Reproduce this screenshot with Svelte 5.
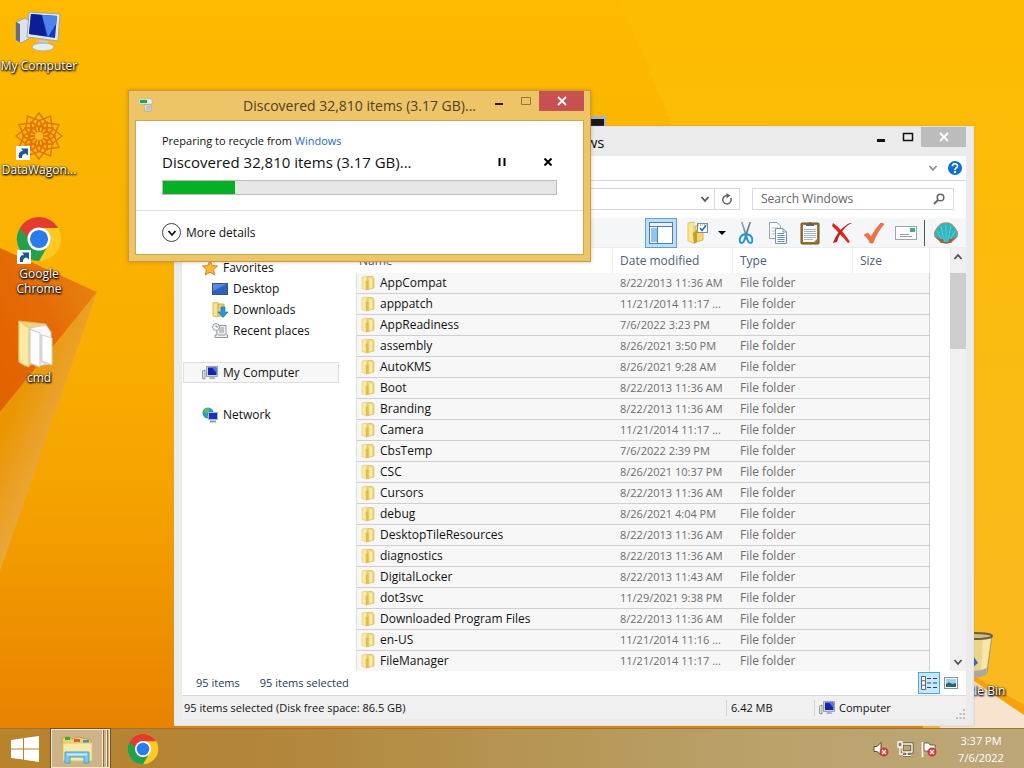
<script>
  const folders = [
    ['AppCompat', '8/22/2013 11:36 AM'],
    ['apppatch', '11/21/2014 11:17 ...'],
    ['AppReadiness', '7/6/2022 3:23 PM'],
    ['assembly', '8/26/2021 3:50 PM'],
    ['AutoKMS', '8/26/2021 9:28 AM'],
    ['Boot', '8/22/2013 11:36 AM'],
    ['Branding', '8/22/2013 11:36 AM'],
    ['Camera', '11/21/2014 11:17 ...'],
    ['CbsTemp', '7/6/2022 2:39 PM'],
    ['CSC', '8/26/2021 10:37 PM'],
    ['Cursors', '8/22/2013 11:36 AM'],
    ['debug', '8/26/2021 4:04 PM'],
    ['DesktopTileResources', '8/22/2013 11:36 AM'],
    ['diagnostics', '8/22/2013 11:36 AM'],
    ['DigitalLocker', '8/22/2013 11:43 AM'],
    ['dot3svc', '11/29/2021 9:38 PM'],
    ['Downloaded Program Files', '8/22/2013 11:36 AM'],
    ['en-US', '11/21/2014 11:16 ...'],
    ['FileManager', '11/21/2014 11:17 ...']
  ];
  const petals = Array.from({ length: 12 }, (_, i) => i * 30);
</script>

{#snippet shortcut()}
  <rect x="1" y="34" width="14" height="14" fill="#fff" />
  <path d="M4 46 C3 41 5 39 8 39 L6 36.500 H13 V43.500 L10.500 41.500 C8 42 7 43 7 46 Z" fill="#1b5796" />
{/snippet}

{#snippet chrome(size)}
  <svg width={size} height={size} viewBox="0 0 48 48" aria-hidden="true">
    <circle cx="24" cy="24" r="23" fill="#fdc922" />
    <path d="M24 24 L4.080 12.500 A23 23 0 0 0 24 47 L34 29.800 Z" fill="#259f4b" />
    <path d="M24 24 H13.500 L4.080 12.500 A23 23 0 0 1 43.900 12.500 H24 Z" fill="#e33b2e" />
    <circle cx="24" cy="24" r="12" fill="#fff" />
    <circle cx="24" cy="24" r="9.500" fill="#2a7cec" />
  </svg>
{/snippet}

{#snippet pc()}
  <svg width="16" height="16" viewBox="0 0 16 16" aria-hidden="true">
    <path d="M0.500 6 L3 5 V14 L0.500 13.500 Z" fill="#dde3dd" stroke="#7c8880" stroke-width=".8" />
    <path d="M4.500 1.500 H15.500 V11.500 H4.500 Z" fill="#c7d2e3" stroke="#8391a8" stroke-width=".8" />
    <path d="M6 2.500 H14.500 V10 H6 Z" fill="#1525a8" />
    <path d="M10 2.500 H14.500 V8 Z" fill="#5578e0" />
    <path d="M8.500 11.500 H12 L13.500 14 H7 Z" fill="#aab4c4" />
  </svg>
{/snippet}

{#snippet folder()}
  <svg width="16" height="16" viewBox="0 0 16 16" aria-hidden="true">
    <path d="M2 2 L6.500 1 V14.500 L2 13.500 Z" fill="#f9eaa4" stroke="#e6cd74" stroke-width=".7" />
    <path d="M7.500 1.500 H12 L14 3 V13 L8 14.500 Z" fill="#efd77c" stroke="#d9bb55" stroke-width=".7" />
    <path d="M5.500 6 L8.500 5 V14.500 L6 15.500 Z" fill="#e0bd52" />
    <path d="M9.500 3 L12 3.500 V13 L9.500 13.500 Z" fill="#f9ecab" />
  </svg>
{/snippet}

{#snippet chevron(up = false)}
  <svg width="10" height="10" viewBox="0 0 10 10" aria-hidden="true">
    <path d={up ? 'M1.500 7 L5 3 L8.500 7' : 'M1.500 3 L5 7 L8.500 3'} fill="none" stroke="currentColor" stroke-width="1.800" />
  </svg>
{/snippet}

<div class="screen">
  <svg class="wallpaper" viewBox="0 0 1024 768" preserveAspectRatio="none" aria-hidden="true">
    <defs>
      <linearGradient id="sky" x1="0" y1="0" x2="0" y2="1">
        <stop offset="0" stop-color="#fdba00" />
        <stop offset=".45" stop-color="#f9ae00" />
        <stop offset=".65" stop-color="#f5a200" />
        <stop offset=".95" stop-color="#e88200" />
      </linearGradient>
      <linearGradient id="fold" x1="1" y1="0" x2="0" y2=".8">
        <stop offset="0" stop-color="#e98a14" />
        <stop offset=".5" stop-color="#e46c06" />
        <stop offset="1" stop-color="#e36200" />
      </linearGradient>
      <linearGradient id="edge" gradientUnits="userSpaceOnUse" x1="10" y1="410" x2="58" y2="430">
        <stop offset="0" stop-color="#ea9600" />
        <stop offset="1" stop-color="#eba63a" />
      </linearGradient>
      <linearGradient id="right" x1="0" y1="0" x2="0" y2="1">
        <stop offset="0" stop-color="#fdbc00" />
        <stop offset="1" stop-color="#fab824" />
      </linearGradient>
    </defs>
    <rect width="1024" height="768" fill="url(#sky)" />
    <path d="M0 412 L97 292 L0 571 Z" fill="url(#edge)" />
    <path d="M0 248 L97 292 L0 412 Z" fill="url(#fold)" />
    <path d="M620 0 H1024 V768 H940 Z" fill="url(#right)" />
    <path d="M940 656 L1024 705 V718 L940 672 Z" fill="#f5a30c" />
    <path d="M940 658 L1024 715 V768 H940 Z" fill="#f8e3cf" />
  </svg>

  <main class="desktop">
    <ul class="shortcuts">
      <li>
        <svg width="48" height="48" viewBox="0 0 48 48" aria-hidden="true">
          <path d="M1 14 L10 10 L15 13 V30 L6 35 L1 32 Z" fill="#dfe2e6" stroke="#98a0aa" />
          <path d="M1 14 L5 16 V34 L1 32 Z" fill="#636c78" />
          <path d="M14 4 L45 6 L43 33 L12 29 Z" fill="#e3e7ec" stroke="#9ca5b3" />
          <path d="M16 6 L42 8 L40 30 L14 26 Z" fill="#153bbb" />
          <path d="M16 6 L27 7 L31 28 L14 26 Z" fill="#0a1e96" />
          <path d="M27 7 L42 8 L41 16 L33 29 Z" fill="#4c84ec" />
          <path d="M24 32 L33 33 L34 38 H23 Z" fill="#c5cbd3" />
          <ellipse cx="28" cy="39" rx="11" ry="4" fill="#e9ecef" stroke="#a8adb4" />
        </svg>
        <span>My Computer</span>
      </li>
      <li>
        <svg width="48" height="48" viewBox="0 0 48 48" aria-hidden="true">
          <g fill="none" stroke="#de7510" stroke-width="1.400">
            {#each petals as a}
              <path d="M24 16 L17 10 L24 1 L31 10 Z M24 24 L19 16 L24 8 L29 16 Z" transform="rotate({a} 24 24)" />
            {/each}
          </g>
          <circle cx="24" cy="24" r="4" fill="#fdbb1c" />
          {@render shortcut()}
        </svg>
        <span>DataWagon...</span>
      </li>
      <li>
        <div class="stack">
          {@render chrome(46)}
          <svg class="arrow" width="48" height="48" viewBox="0 0 48 48" aria-hidden="true">{@render shortcut()}</svg>
        </div>
        <span>Google Chrome</span>
      </li>
      <li>
        <svg width="48" height="48" viewBox="0 0 48 48" aria-hidden="true">
          <path d="M4 1 L31 4 V42 L10 46 L4 42 Z" fill="#f1d37c" stroke="#e0bb5c" />
          <path d="M15 8 L31 5 L36 12 V44 L20 46 Z" fill="#f8f8f8" stroke="#ccc" />
          <path d="M4 1 L14 8 V47 L4 42 Z" fill="#fbe9a8" stroke="#e5c56c" />
          <path d="M15 9 L25 13 V47 L15 43 Z" fill="#fcfcfc" stroke="#c8c8c8" />
          <path d="M25 14 L33 17 V45 L25 42 Z" fill="#d5d7d9" />
          <path d="M27 15 L37 18 V45 L27 41 Z" fill="#fff" stroke="#d2d2d2" />
        </svg>
        <span>cmd</span>
      </li>
    </ul>

    <div class="bin">
      <svg width="48" height="48" viewBox="0 0 48 48" aria-hidden="true">
        <path d="M6 4 H42 L37 42 Q24 48 11 42 Z" fill="#ecd489" stroke="#a59a78" />
        <path d="M33 6 H41 L36 40 L31 43 Z" fill="#f7e7ac" />
        <path d="M11 37 Q24 43 37 37 L36 44 Q24 49 12 44 Z" fill="#aaa89f" />
        <ellipse cx="24" cy="5" rx="18" ry="3" fill="#d5bd70" stroke="#625d50" stroke-width="2" />
        <path d="M18 30 L22 23 L28 32 L22 37 Z" fill="#2d67bd" />
      </svg>
      <span>Recycle Bin</span>
    </div>

    <div class="console"></div>

    <section class="window explorer" aria-label="Windows">
      <header class="titlebar">
        <h1>Windows</h1>
        <div class="controls">
          <button aria-label="Minimize"><svg width="10" height="12"><path d="M1 9.500 H9" stroke="#111" stroke-width="3" /></svg></button>
          <button aria-label="Maximize"><svg width="12" height="12"><path d="M1 2.500 H11 M1.500 2 V9.500 H10.500 V2" fill="none" stroke="#111" stroke-width="1.500" /></svg></button>
          <button class="close" aria-label="Close"><svg width="10" height="10"><path d="M1 1 L9 9 M9 1 L1 9" stroke="#fff" stroke-width="1.800" /></svg></button>
        </div>
      </header>
      <div class="client">
        <div class="ribbon">
          <button class="plain faint" aria-label="Expand the ribbon">{@render chevron()}</button>
          <button class="plain" aria-label="Help">
            <svg width="14" height="14" viewBox="0 0 14 14"><circle cx="7" cy="7" r="7" fill="#0d6fce" /><path d="M4.500 5.200 C4.500 2 9.500 2 9.500 5 C9.500 7 7 6.800 7 9" fill="none" stroke="#fff" stroke-width="1.700" /><rect x="6" y="10" width="2" height="2" fill="#fff" /></svg>
          </button>
        </div>
        <div class="address">
          <div class="path">
            <input aria-label="Address" />
            <button class="plain" aria-label="Previous locations">{@render chevron()}</button>
            <button class="plain refresh" aria-label="Refresh">
              <svg width="12" height="12" viewBox="0 0 12 12"><path d="M9.800 5 A4.200 4.200 0 1 1 6 2.500" fill="none" stroke="#666" stroke-width="1.500" /><path d="M5.500 0 L9.500 2.500 L5.500 5.500 Z" fill="#666" /></svg>
            </button>
          </div>
          <label class="search">
            <input type="text" placeholder="Search Windows" aria-label="Search Windows" />
            <svg width="12" height="12" viewBox="0 0 12 12" aria-hidden="true"><circle cx="7.500" cy="4.500" r="3.300" fill="none" stroke="#666" stroke-width="1.500" /><path d="M5 7 L1 11" stroke="#666" stroke-width="2" /></svg>
          </label>
        </div>
        <div class="toolbar">
          <button class="on" aria-label="Navigation pane">
            <svg width="24" height="22" viewBox="0 0 24 22"><rect x=".5" y=".5" width="23" height="21" fill="#fff" stroke="#4b7fae" /><rect x="1" y="1" width="22" height="3" fill="#e8f3fc" /><path d="M1 4.500 H23" stroke="#4b7fae" /><rect x="2" y="6" width="6" height="14" fill="#8fc5ef" /><path d="M8.500 5 V21" stroke="#4b7fae" /></svg>
          </button>
          <button aria-label="Folder options">
            <svg width="22" height="24" viewBox="0 0 22 24"><path d="M1 2 L7 1 V22 L1 20 Z" fill="#f8e795" stroke="#e2c764" /><path d="M8 5 L16 4 V19 L9 21 Z" fill="#f0d970" stroke="#d8bb4c" /><path d="M6 12 L10 9 V21 L7 23 Z" fill="#c79b2b" /><rect x="10.500" y="2.500" width="10" height="9" fill="#fff" stroke="#7d8ea8" /><path d="M11 4 H21" stroke="#7d8ea8" stroke-dasharray="1 1" /><path d="M13 7 L15 9.500 L19 4.500" fill="none" stroke="#2166c7" stroke-width="1.500" /></svg>
          </button>
          <button class="narrow" aria-label="More options"><svg width="8" height="4"><path d="M0 0 H8 L4 4 Z" /></svg></button>
          <button aria-label="Cut">
            <svg width="16" height="24" viewBox="0 0 16 24"><path d="M3 1 L4.500 1 L9.500 15 L7 14 Z" fill="#8b98a6" /><path d="M13 1 L11.500 1 L6.500 15 L9 14 Z" fill="#6f7d8d" /><path d="M7.500 13 C2 14 1 18 2 21 C5 24 7 19 8 14 C9 19 11 24 14 21 C15 18 14 14 8.500 13" fill="none" stroke="#2497d3" stroke-width="2" /></svg>
          </button>
          <button aria-label="Copy">
            <svg width="20" height="24" viewBox="0 0 20 24"><path d="M1.500 1.500 H9 L12.500 5 V17.500 H1.500 Z" fill="#fff" stroke="#8ea0b2" /><path d="M3.500 7 H10 M3.500 10 H10 M3.500 13 H10" stroke="#a4bbcf" /><path d="M7.500 7.500 H15 L18.500 11 V22.500 H7.500 Z" fill="#fff" stroke="#7f93a8" /><path d="M15 7.500 V11 H18.500" fill="none" stroke="#7f93a8" /><path d="M9.500 12.500 H16 M9.500 14.500 H16.500 M9.500 16.500 H16.500 M9.500 18.500 H16.500 M9.500 20.500 H16.500" stroke="#5b8fc0" /></svg>
          </button>
          <button aria-label="Paste">
            <svg width="20" height="24" viewBox="0 0 20 24"><rect x="1" y="2" width="18" height="21" rx="1" fill="#a2712d" stroke="#77501a" /><path d="M3 4 H17 V18 L14 21 H3 Z" fill="#fff" /><path d="M4 8.500 H16 M4 10.500 H16 M4 12.500 H16 M4 14.500 H16 M4 16.500 H16 M4 18.500 H13" stroke="#9fb4c6" /><path d="M6 5 V3 H8 Q10 -1 12 3 H14 V5 Z" fill="#59646b" /></svg>
          </button>
          <button aria-label="Delete">
            <svg width="22" height="22" viewBox="0 0 22 22"><path d="M2 1 C8 5 14 12 19 20 L17 21 C11 14 5 8 1 4 Z" fill="#d92918" /><path d="M21 1 C14 4 8 12 6 20 L2 21 C5 12 12 4 19 1 Z" fill="#c51f16" /></svg>
          </button>
          <button aria-label="Apply">
            <svg width="22" height="22" viewBox="0 0 22 22"><path d="M1 13 L5 11 L8 15 C11 9 15 4 18 1 L21 2 C16 8 12 15 10 21 H7 C6 18 4 15 1 13 Z" fill="#ee7248" stroke="#dd6238" stroke-width=".6" /></svg>
          </button>
          <button aria-label="Mail">
            <svg width="22" height="16" viewBox="0 0 22 16"><rect x=".5" y="1.500" width="21" height="13" fill="#fdfdfd" stroke="#9aa5ae" /><rect x="15" y="3" width="5" height="4" fill="#3eaa94" /><path d="M5 9.500 H14 M5 11.500 H17" stroke="#9a9fa8" /></svg>
          </button>
          <i class="rule"></i>
          <button aria-label="Shell">
            <svg width="24" height="22" viewBox="0 0 24 22"><path d="M7 20 L1 15 Q-1 10 3 6 Q7 0 12 1 Q17 0 21 6 Q25 10 23 15 L17 20 Q12 23 7 20 Z" fill="#2db5bd" stroke="#b98a5c" /><path d="M12 20 V3 M10 19 L7 4 M8 18 L3 9 M14 19 L17 4 M16 18 L21 9" stroke="#5fd0d6" /><path d="M2 15 L7 17 H17 L22 15 L17 21 H7 Z" fill="#a55f42" /><path d="M8 15 H16 L14 20 H10 Z" fill="#35c4cc" /></svg>
          </button>
        </div>

        <div class="panes">
          <nav>
            <ul>
              <li><svg width="16" height="16" viewBox="0 0 16 16" aria-hidden="true"><path d="M8 .5 L10.200 5.500 L15.500 6 L11.500 9.700 L12.700 15 L8 12.200 L3.300 15 L4.500 9.700 L.5 6 L5.800 5.500 Z" fill="#fcb930" stroke="#df7f22" /></svg>Favorites</li>
              <li class="sub"><svg width="16" height="16" viewBox="0 0 16 16" aria-hidden="true"><rect x=".5" y="2.500" width="15" height="11" fill="#2c62bd" stroke="#3c5377" /><path d="M1 3 H15 L1 10 Z" fill="#538ae0" /></svg>Desktop</li>
              <li class="sub"><svg width="16" height="16" viewBox="0 0 16 16" aria-hidden="true"><path d="M1 1 L6 .5 V15 L1 14 Z" fill="#f7e492" stroke="#d9b952" /><path d="M6 2 H12 V14 H6 Z" fill="#e8cd71" stroke="#cfae49" /><path d="M9 5 H13 V10 H16 L11 15.500 L6 10 H9 Z" fill="#2a94dc" stroke="#176eaf" stroke-width=".6" /></svg>Downloads</li>
              <li class="sub"><svg width="16" height="16" viewBox="0 0 16 16" aria-hidden="true"><path d="M4.500 2.500 H14 V12 H15.500 V14.500 H3 V12 H5 Z" fill="#eef0f1" stroke="#8e969b" /><path d="M7 5 H12 M7 7 H12 M7 9 H12 M6 12 H13" stroke="#8e969b" /><circle cx="4" cy="4" r="3.400" fill="#fff" stroke="#8e969b" /><path d="M4 2 V4 H6" fill="none" stroke="#777" stroke-width=".8" /></svg>Recent places</li>
              <li class="chosen">{@render pc()}My Computer</li>
              <li class="gap"><svg width="16" height="16" viewBox="0 0 16 16" aria-hidden="true"><circle cx="6" cy="6" r="5.500" fill="#2a94c8" /><path d="M2 3 Q5 0 8 2 Q7 6 3 7 Z M4 9 L8 8 L7 11 Z" fill="#5cc35c" /><rect x="6.500" y="5.500" width="9" height="7" fill="#1931b4" stroke="#a9b6cc" /><path d="M8 14.500 H14" stroke="#8e9aae" stroke-width="2" /></svg>Network</li>
            </ul>
          </nav>
          <div class="list">
            <table>
              <thead><tr><th>Name</th><th>Date modified</th><th>Type</th><th>Size</th></tr></thead>
              <tbody>
                {#each folders as [name, date]}
                  <tr><td><div class="name">{@render folder()}{name}</div></td><td class="small">{date}</td><td>File folder</td><td></td></tr>
                {/each}
              </tbody>
            </table>
          </div>
          <div class="scroll">
            <button class="plain" aria-label="Scroll up">{@render chevron(true)}</button>
            <i class="thumb"></i>
            <button class="plain" aria-label="Scroll down">{@render chevron()}</button>
          </div>
        </div>

        <div class="details small">
          <span>95 items</span><span>95 items selected</span>
          <div class="views">
            <button class="active" aria-label="Details view">
              <svg width="16" height="14" viewBox="0 0 16 14"><path d="M.5 .5 H4.500 V13.500 H.5 Z M.5 4.800 H4.500 M.5 9.200 H4.500" fill="#fff" stroke="#567" /><path d="M6 2.500 H10 M12 2.500 H16 M6 7 H10 M12 7 H16 M6 11.500 H10 M12 11.500 H16" stroke="#345" stroke-width="1.200" /></svg>
            </button>
            <button aria-label="Large icons view">
              <svg width="14" height="12" viewBox="0 0 14 12"><rect x=".5" y=".5" width="13" height="11" fill="#fff" stroke="#8094a4" /><rect x="2" y="2" width="10" height="8" fill="#9cd0ef" /><path d="M2 7 Q5 4 8 7 L12 6 V10 H2 Z" fill="#2a6670" /></svg>
            </button>
          </div>
        </div>
        <footer class="status small">
          <span class="grow">95 items selected (Disk free space: 86.5 GB)</span>
          <span class="bytes">6.42 MB</span>
          <span class="zone">{@render pc()}Computer</span>
          <svg class="grip" width="10" height="10" viewBox="0 0 10 10" aria-hidden="true"><path d="M7 0 h2 v2 h-2z M7 4 h2 v2 h-2z M7 8 h2 v2 h-2z M3.500 4 h2 v2 h-2z M3.500 8 h2 v2 h-2z M0 8 h2 v2 h-2z" fill="#bcbcbc" /></svg>
        </footer>
      </div>
    </section>

    <section class="window dialog" aria-label="Recycle progress">
      <header class="titlebar">
        <svg width="16" height="16" viewBox="0 0 16 16" aria-hidden="true"><rect x="1" y="2" width="13" height="5" fill="#eef2ee" stroke="#a9b6a9" stroke-width=".6" /><rect x="2" y="3" width="7" height="3" fill="#1fa84a" /><path d="M6 8 H13 V14 H7 Z" fill="#e5e9ec" stroke="#9aa4ab" stroke-width=".7" /><path d="M8 10 H12 M8 12 H12" stroke="#7f8d96" stroke-width=".8" /></svg>
        <h2>Discovered 32,810 items (3.17 GB)...</h2>
        <div class="controls">
          <button aria-label="Minimize"><svg width="10" height="12"><path d="M1 9 H9" stroke="#2a1c08" stroke-width="2" /></svg></button>
          <button aria-label="Maximize" disabled><svg width="12" height="12"><path d="M1.500 2.500 H10.500 V9.500 H1.500 Z" fill="none" stroke="#9c7530" /></svg></button>
          <button class="close" aria-label="Close"><svg width="10" height="10"><path d="M1 1 L9 9 M9 1 L1 9" stroke="#fff" stroke-width="1.800" /></svg></button>
        </div>
      </header>
      <div class="client">
        <div class="progress">
          <p class="small">Preparing to recycle from <a href="#windows">Windows</a></p>
          <div class="headline">
            <strong>Discovered 32,810 items (3.17 GB)...</strong>
            <button class="plain" aria-label="Pause"><svg width="8" height="8"><path d="M1.500 0 V8 M6.500 0 V8" stroke="#000" stroke-width="2" /></svg></button>
            <button class="plain" aria-label="Cancel"><svg width="8" height="8"><path d="M.5 .5 L7.500 7.500 M7.500 .5 L.5 7.500" stroke="#000" stroke-width="2" /></svg></button>
          </div>
          <div class="bar" role="progressbar" aria-label="Progress" aria-valuenow="18"><i style="width: 18.200%"></i></div>
        </div>
        <button class="more"><span class="ring">{@render chevron()}</span>More details</button>
      </div>
    </section>
  </main>

  <footer class="taskbar">
    <button class="start" aria-label="Start"><svg width="28" height="26" viewBox="0 0 28 26"><path d="M0 4 L12 2.300 V12.400 H0 Z M13 2.100 L28 0 V12.400 H13 Z M0 13.500 H12 V23.600 L0 22 Z M13 13.500 H28 V26 L13 23.800 Z" fill="#fff" /></svg></button>
    <button class="running" aria-label="File Explorer">
      <svg width="34" height="30" viewBox="0 0 34 30"><path d="M2 4 L8 2 L12 5 L18 3 L31 6 V26 H3 Z" fill="#ecd16c" stroke="#c9a341" /><path d="M5 3 H10 V6 H5 Z" fill="#3fa153" /><path d="M14 5 H20 V8 H14 Z" fill="#d95a3d" /><path d="M23 6 H29 V9 H23 Z" fill="#4a8fd0" /><path d="M3 9 H32 V27 H3 Z" fill="#f8eaa6" stroke="#e0c66f" /><path d="M5 18 H29 V29 H24 V23 H10 V29 H5 Z" fill="#7cc8e9" stroke="#48a2cb" /><path d="M7 20.500 H27" stroke="#c6ebfa" stroke-width="2" /></svg>
    </button>
    <button class="pin" aria-label="Google Chrome">{@render chrome(32)}</button>
    <div class="tray">
      <svg width="18" height="18" viewBox="0 0 18 18" aria-hidden="true"><path d="M2 6.500 H5 L9 2.500 V15 L5 11.500 H2 Z" fill="#fff" stroke="#5b4a2a" /><circle cx="12" cy="12" r="4.500" fill="#d33b3b" /><path d="M10 10 L14 14 M14 10 L10 14" stroke="#fff" stroke-width="1.400" /></svg>
      <svg width="18" height="18" viewBox="0 0 18 18" aria-hidden="true"><path d="M6 4 H16 V12 H6 Z M11 12 V15 M7 15.500 H15" fill="none" stroke="#5b4a2a" stroke-width="3" /><path d="M6 4 H16 V12 H6 Z M11 12 V15 M7 15.500 H15" fill="none" stroke="#fff" stroke-width="1.400" /><path d="M2 2 H6 V7 H2 Z M4 7 V14 H7" fill="#8c7a50" stroke="#fff" stroke-width="1.300" /></svg>
      <svg width="18" height="18" viewBox="0 0 18 18" aria-hidden="true"><path d="M2.500 2 V17" stroke="#fff" stroke-width="1.800" /><path d="M4 3 H9 L10 5 H15 V11 H4 Z" fill="#fff" stroke="#5b4a2a" stroke-width=".8" /><circle cx="12" cy="12" r="4.500" fill="#d33b3b" /><path d="M10 10 L14 14 M14 10 L10 14" stroke="#fff" stroke-width="1.400" /></svg>
    </div>
    <div class="clock small"><time>3:37 PM</time><time>7/6/2022</time></div>
  </footer>
</div>

<style>
  :global(body) { margin: 0; }
  .screen, .screen * { box-sizing: border-box; }
  .screen {
    position: relative;
    display: flex;
    flex-direction: column;
    height: 100vh;
    overflow: hidden;
    font: 12px/16px "Segoe UI", "Open Sans", "Noto Sans", sans-serif;
    color: #111;
  }
  .small { font-size: 11px; }
  svg { display: block; flex: none; }
  ul { margin: 0; padding: 0; list-style: none; }
  h1, h2, p { margin: 0; font-weight: 400; }
  button { padding: 0; border: 0; background: none; font: inherit; color: inherit; display: grid; place-items: center; }
  input { border: 0; padding: 0; background: none; font: inherit; min-width: 0; flex: 1; outline: 0; }
  i { display: block; }
  .wallpaper { position: absolute; inset: 0; width: 100%; height: 100%; }
  .desktop { position: relative; flex: 1; min-height: 0; }

  .shortcuts { width: 78px; padding-top: 8px; }
  .shortcuts li { height: 104px; display: flex; flex-direction: column; align-items: center; gap: 2px; }
  .shortcuts span, .bin span {
    line-height: 15px;
    color: #fff;
    text-align: center;
    text-shadow: 1px 1px 2px #000, 0 1px 2px #000, 0 0 2px rgba(0, 0, 0, .7);
  }
  .shortcuts li:nth-child(3) span { width: 60px; }
  .stack { position: relative; height: 48px; }
  .arrow { position: absolute; left: 0; top: 0; }
  .bin { position: absolute; right: 12px; bottom: 30px; width: 76px; display: flex; flex-direction: column; align-items: center; gap: 4px; }
  .console { position: absolute; left: 570px; top: 116px; width: 36px; height: 30px; background: #17171c; border: 2px solid #a9b3bd; border-top-width: 3px; }

  .window { position: absolute; display: flex; flex-direction: column; }
  .titlebar { display: flex; align-items: flex-start; flex: none; }
  .controls { display: flex; }
  .controls button { width: 27px; height: 20px; }
  .controls .close { width: 45px; }
  .client { display: flex; flex-direction: column; flex: 1; min-height: 0; background: #fff; }

  .explorer { left: 174px; right: 50px; top: 126px; bottom: 2px; padding: 0 7px 6px 8px; background: #ebebeb; border: 1px solid #e2e2e2; border-left: 0; box-shadow: 0 0 1px #9b9b9b; }
  .explorer .titlebar { height: 29px; }
  .explorer h1 { flex: 1; padding: 5px 0 0 96px; text-align: center; font-size: 15px; line-height: 20px; }
  .explorer .close { background: #bcbcbc; }
  .ribbon { display: flex; justify-content: flex-end; align-items: center; gap: 10px; height: 25px; padding-right: 4px; border-bottom: 1px solid #dadbdc; }
  .faint { color: #8f8f8f; }
  .address { display: flex; align-items: center; gap: 12px; height: 37px; padding: 0 12px 2px 60px; color: #555; }
  .path, .search { display: flex; align-items: center; height: 22px; border: 1px solid #d9d9d9; }
  .path { flex: 1; }
  .refresh { width: 25px; height: 20px; margin-left: 4px; border-left: 1px solid #d9d9d9; }
  .search { width: 202px; padding: 0 8px; }
  .search input::placeholder { color: #666; opacity: 1; }
  .toolbar { display: flex; justify-content: flex-end; align-items: center; height: 30px; padding-right: 4px; background: #f5f6f7; border-bottom: 1px solid #ececec; flex: none; }
  .toolbar button { width: 32px; height: 30px; }
  .toolbar .on { background: #c0ddf8; border: 1px solid #5f9fdc; margin-right: 5px; }
  .toolbar .narrow { width: 16px; }
  .rule { width: 1px; height: 26px; margin: 0 5px 0 2px; background: #555; }

  .panes { display: flex; flex: 1; min-height: 0; overflow: hidden; }
  nav { width: 157px; flex: none; padding: 9px 0 0 1px; }
  nav li { display: flex; align-items: center; gap: 5px; height: 21px; padding-left: 19px; }
  nav .sub { padding-left: 29px; }
  nav .chosen { margin-top: 21px; padding-left: 18px; background: #f7f7f7; border: 1px solid #dedede; }
  nav .gap { margin-top: 21px; }
  .list { flex: 1; min-width: 0; padding: 0 20px 0 17px; overflow: hidden; }
  table { width: 100%; border-collapse: separate; border-spacing: 0; table-layout: fixed; }
  th { height: 25px; padding: 0 0 0 7px; text-align: left; font-weight: 400; color: #4c607a; border-right: 1px solid #ececec; }
  th:nth-child(2), th:nth-child(3) { width: 120px; }
  th:nth-child(4) { width: 77px; }
  th:first-child { padding-left: 3px; }
  td { height: 21px; padding: 0 0 0 7px; background: #f7f7f7; border-bottom: 1px solid #cfcfcf; color: #6d6d6d; white-space: nowrap; overflow: hidden; }
  td:first-child { padding-left: 3px; border-left: 1px solid #dedede; color: #111; }
  td:last-child { border-right: 1px solid #cfcfcf; }
  .name { display: flex; align-items: center; gap: 4px; }
  .scroll { width: 16px; flex: none; display: flex; flex-direction: column; background: #f0f0f0; color: #505050; }
  .scroll button { height: 18px; flex: none; }
  .thumb { height: 76px; margin: 7px 0 auto; background: #cdcdcd; }

  .details { display: flex; align-items: center; gap: 20px; height: 24px; padding: 0 4px 0 14px; color: #1e395b; flex: none; }
  .views { display: flex; margin-left: auto; }
  .views button { width: 22px; height: 22px; }
  .views .active { background: #c7e8fa; border: 1px solid #4ba8dd; }
  .status { display: flex; align-items: center; height: 24px; padding-left: 2px; background: #f0f0f0; border-top: 1px solid #d9d9d9; flex: none; }
  .status .grow { flex: 1; }
  .bytes { width: 88px; padding-left: 4px; border-left: 1px solid #d2d2d2; }
  .zone { width: 142px; padding-left: 4px; border-left: 1px solid #d2d2d2; display: flex; align-items: center; gap: 4px; }
  .grip { align-self: flex-end; }

  .dialog { left: 128px; top: 90px; width: 463px; padding: 0 6px 6px; background: #edc467; border: 1px solid #c79b3c; box-shadow: 0 0 4px rgba(90, 60, 0, .3); }
  .dialog .titlebar { height: 29px; padding-left: 3px; }
  .dialog .titlebar > svg { margin-top: 6px; }
  .dialog h2 { flex: 1; padding: 5px 9px 0 0; text-align: right; font-size: 14px; line-height: 20px; color: #52401c; }
  .dialog .close { background: #c75050; }
  .dialog .client { border: 1px solid #cfa74f; }
  .progress { padding: 12px 26px 15px; border-bottom: 1px solid #dfdfdf; }
  .progress a { color: #2a69b5; text-decoration: none; }
  .headline { display: flex; align-items: center; gap: 28px; height: 22px; margin: 2px 0 7px; }
  .headline strong { flex: 1; font-weight: 400; font-size: 15px; line-height: 20px; }
  .headline button { width: 18px; height: 18px; }
  .bar { height: 15px; background: #e6e6e6; border: 1px solid #bcbcbc; }
  .bar i { height: 13px; background: #06b025; }
  .more { display: flex; align-items: center; gap: 5px; height: 43px; padding-left: 26px; }
  .ring { display: grid; place-items: center; width: 19px; height: 19px; border: 1px solid #444; border-radius: 50%; }

  .taskbar { position: relative; display: flex; align-items: stretch; height: 40px; flex: none; background: linear-gradient(90deg, #b8832b, #b2853a 25%, #b69451 50%, #b9a26c 75%, #bda779); border-top: 1px solid #9a7533; color: #fff; }
  .start { width: 50px; }
  .running { width: 59px; margin-left: 1px; padding-right: 7px; border: 1px solid #f6e6c8; outline: 1px solid #6d522a; background: linear-gradient(90deg, #cdb389 50px, #f8ecd2 50px 51px, #8b6c3c 51px 52px, #cdb389 52px 54px, #f8ecd2 54px 55px, #8b6c3c 55px 56px, #cdb389 56px); }
  .pin { width: 66px; }
  .tray { display: flex; align-items: center; gap: 6px; margin-left: auto; }
  .clock { display: flex; flex-direction: column; justify-content: center; align-items: center; width: 86px; line-height: 17px; }
</style>
